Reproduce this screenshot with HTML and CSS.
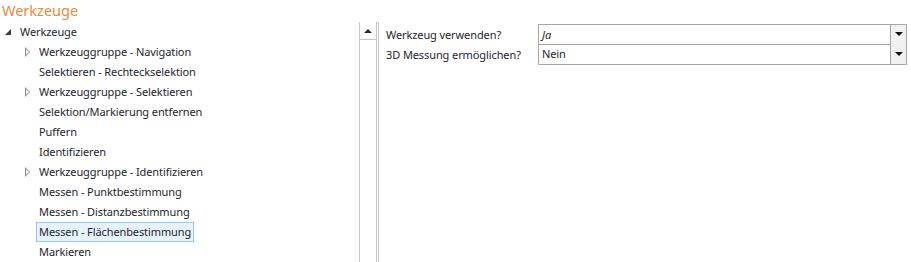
FILE: index.html
```html
<!DOCTYPE html>
<html lang="de">
<head>
    <meta charset="UTF-8" />
    <title>Werkzeuge</title>
    <link rel="stylesheet" href="styles.css">
</head>
<body>
    <h1 class="title">Werkzeuge</h1>
    <div class="main">
        <div class="tree">
            <div class="row root">
                <span class="exp exp-open"></span>
                <span class="label">Werkzeuge</span>
            </div>
            <div class="row child">
                <span class="exp exp-closed"></span>
                <span class="label">Werkzeuggruppe - Navigation</span>
            </div>
            <div class="row child">
                <span class="exp"></span>
                <span class="label">Selektieren - Rechteckselektion</span>
            </div>
            <div class="row child">
                <span class="exp exp-closed"></span>
                <span class="label">Werkzeuggruppe - Selektieren</span>
            </div>
            <div class="row child">
                <span class="exp"></span>
                <span class="label">Selektion/Markierung entfernen</span>
            </div>
            <div class="row child">
                <span class="exp"></span>
                <span class="label">Puffern</span>
            </div>
            <div class="row child">
                <span class="exp"></span>
                <span class="label">Identifizieren</span>
            </div>
            <div class="row child">
                <span class="exp exp-closed"></span>
                <span class="label">Werkzeuggruppe - Identifizieren</span>
            </div>
            <div class="row child">
                <span class="exp"></span>
                <span class="label">Messen - Punktbestimmung</span>
            </div>
            <div class="row child">
                <span class="exp"></span>
                <span class="label">Messen - Distanzbestimmung</span>
            </div>
            <div class="row child">
                <span class="exp"></span>
                <span class="label selected">Messen - Flächenbestimmung</span>
            </div>
            <div class="row child">
                <span class="exp"></span>
                <span class="label">Markieren</span>
            </div>
        </div>
        <div class="scrollbar">
            <div class="scroll-up"><span class="arrow-up"></span></div>
        </div>
        <div class="props">
            <div class="prop">
                <div class="prop-name">Werkzeug verwenden?</div>
                <div class="combo">
                    <span class="combo-value italic">Ja</span>
                    <span class="combo-btn"><span class="arrow-down"></span></span>
                </div>
            </div>
            <div class="prop">
                <div class="prop-name">3D Messung ermöglichen?</div>
                <div class="combo">
                    <span class="combo-value">Nein</span>
                    <span class="combo-btn"><span class="arrow-down"></span></span>
                </div>
            </div>
        </div>
    </div>
</body>
</html>
```
FILE: styles.css
```css
* {
    box-sizing: border-box;
    margin: 0;
    padding: 0;
}

body {
    font-family: 'Noto Sans', 'Open Sans', sans-serif;
    font-size: 11px;
    letter-spacing: -0.1px;
    color: #1e1e2e;
    background: #ffffff;
    width: 911px;
    height: 262px;
    overflow: hidden;
}

.title {
    font-size: 14.5px;
    font-weight: 400;
    letter-spacing: 0;
    color: #ea8a3c;
    height: 22px;
    line-height: 20px;
    padding-left: 2px;
}

.main {
    display: flex;
    height: 240px;
}

.tree {
    width: 358px;
    flex: none;
}

.row {
    display: flex;
    align-items: center;
    height: 20px;
}

.root {
    padding-left: 5px;
}

.child {
    padding-left: 24px;
}

.exp {
    width: 12px;
    height: 20px;
    flex: none;
    position: relative;
}

.exp-open::before {
    content: '';
    position: absolute;
    left: 0;
    top: 7px;
    width: 0;
    height: 0;
    border-left: 6px solid transparent;
    border-bottom: 6px solid #3a3a3a;
}

.exp-closed::before {
    content: '';
    position: absolute;
    left: 1px;
    top: 5px;
    width: 0;
    height: 0;
    border-top: 5px solid transparent;
    border-bottom: 5px solid transparent;
    border-left: 5px solid #8a8a8a;
}

.exp-closed::after {
    content: '';
    position: absolute;
    left: 2px;
    top: 7px;
    width: 0;
    height: 0;
    border-top: 3px solid transparent;
    border-bottom: 3px solid transparent;
    border-left: 3px solid #ffffff;
}

.label {
    height: 20px;
    line-height: 18px;
    padding: 0 2px;
    border: 1px solid transparent;
    white-space: nowrap;
}

.selected {
    background: #e6f3fc;
    border-color: #8fcbef;
}

.scrollbar {
    width: 18px;
    flex: none;
    border-left: 1px solid #c8c8c8;
    border-right: 1px solid #c8c8c8;
    margin-left: 1px;
}

.scroll-up {
    height: 18px;
    border-bottom: 1px solid #c8c8c8;
    display: flex;
    justify-content: center;
    align-items: center;
}

.arrow-up {
    width: 0;
    height: 0;
    border-left: 4px solid transparent;
    border-right: 4px solid transparent;
    border-bottom: 4px solid #2a2a2a;
}

.props {
    flex: 1;
    margin-left: 1px;
    border-left: 1px solid #c8c8c8;
    padding: 2px 4px 0 7px;
}

.prop {
    display: flex;
    height: 20px;
    align-items: center;
}

.prop-name {
    width: 152px;
    flex: none;
}

.combo {
    flex: 1;
    display: flex;
    height: 21px;
    border: 1px solid #a6a6a6;
}

.prop + .prop .combo {
    border-top: none;
    height: 21px;
}

.combo-value {
    flex: 1;
    padding-left: 3px;
    line-height: 19px;
}

.italic {
    font-style: italic;
}

.combo-btn {
    width: 16px;
    border-left: 1px solid #a6a6a6;
    background: #f0f0f0;
    display: flex;
    justify-content: center;
    align-items: center;
}

.arrow-down {
    width: 0;
    height: 0;
    border-left: 4px solid transparent;
    border-right: 4px solid transparent;
    border-top: 4px solid #111111;
}
```
